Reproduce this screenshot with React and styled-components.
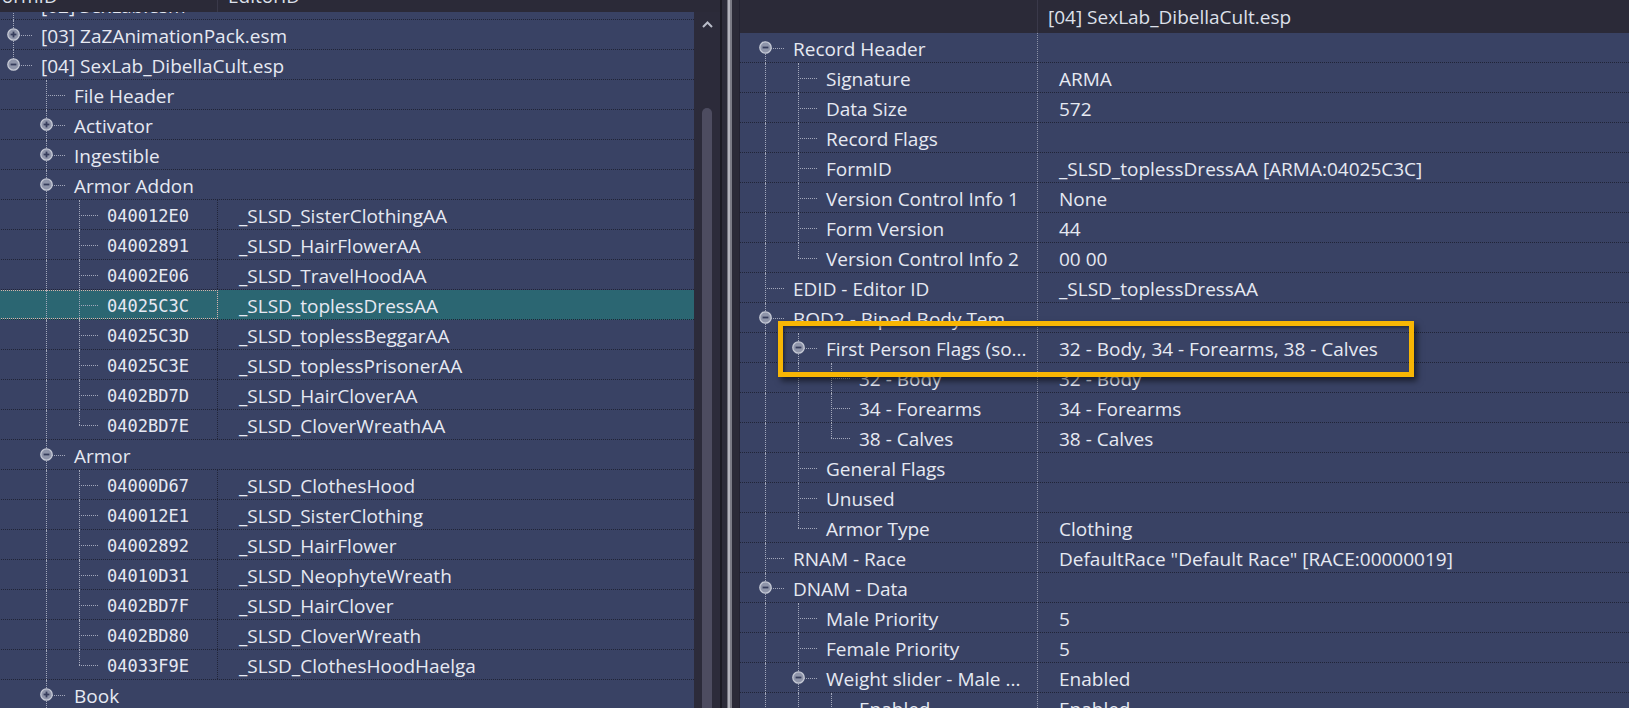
import React from 'react';
import styled, { createGlobalStyle } from 'styled-components';

const GlobalStyle = createGlobalStyle`
  html, body { margin: 0; padding: 0; background: #2b2a38; overflow: hidden; }
  #root { width: 1629px; height: 708px; }
`;

const Frame = styled.div`
  display: flex;
  width: 1629px;
  height: 708px;
  overflow: hidden;
  font-family: "Open Sans", "Noto Sans", sans-serif;
  font-size: 19px;
  color: #e6e9f2;
  background: #2b2a38;
`;

const LeftPane = styled.section`
  flex: 0 0 720px;
  display: flex;
  flex-direction: column;
  overflow: hidden;
`;

const RightPane = styled.section`
  flex: 1 1 auto;
  display: flex;
  flex-direction: column;
  position: relative;
  overflow: hidden;
  min-width: 0;
`;

const HeaderClip = styled.div`
  flex: 0 0 ${p => p.$h}px;
  overflow: hidden;
  background: #2b2a38;
`;

const HeaderBar = styled.div`
  display: flex;
  height: 33px;
  margin-top: ${p => p.$offset}px;
  background: #2b2a38;
`;

const HeaderCell = styled.div`
  flex: ${p => (p.$w ? `0 0 ${p.$w}px` : '1 1 auto')};
  box-sizing: border-box;
  padding-left: ${p => p.$pad}px;
  text-indent: ${p => p.$indent || 0}px;
  line-height: 33px;
  padding-top: 1px;
  white-space: nowrap;
  overflow: hidden;
  color: #dde0ea;
  border-right: ${p => (p.$w ? '1px solid #3a394a' : 'none')};
`;

const Body = styled.div`
  flex: 1 1 auto;
  display: flex;
  min-height: 0;
`;

const TreeView = styled.div`
  flex: 1 1 auto;
  overflow: hidden;
  background: #394264;
  min-width: 0;
`;

const TreeList = styled.div`
  margin-top: ${p => p.$top}px;
  margin-left: ${p => p.$left}px;
`;

const Row = styled.div`
  display: flex;
  height: 30px;
  box-sizing: border-box;
  border-bottom: 1px dotted #202437;
  background: ${p => (p.$sel ? '#2b6672' : 'transparent')};
`;

const NameCell = styled.div`
  display: flex;
  align-items: stretch;
  flex: ${p => (p.$split ? `0 0 ${p.$w}px` : '1 1 auto')};
  min-width: 0;
  box-sizing: border-box;
  padding-left: ${p => p.$pad}px;
  border-right: ${p => (p.$split ? `1px dotted ${p.$sep}` : 'none')};
  outline: ${p => (p.$focus ? '1px dotted #d6b4ae' : 'none')};
  outline-offset: -1px;
`;

const Guide = styled.div`
  flex: 0 0 33px;
  position: relative;
  &::before {
    content: '';
    display: ${p => (p.$on ? 'block' : 'none')};
    position: absolute;
    left: 16px;
    top: 0;
    bottom: -1px;
    border-left: 1px dotted #a3a8bb;
  }
`;

const Node = styled.div`
  flex: 0 0 33px;
  position: relative;
  display: flex;
  align-items: center;
  justify-content: center;
  &::before {
    content: '';
    position: absolute;
    left: 16px;
    top: ${p => (p.$first ? '50%' : '0')};
    bottom: ${p => (p.$last ? '50%' : '-1px')};
    border-left: 1px dotted #a3a8bb;
  }
  &::after {
    content: '';
    position: absolute;
    left: 16px;
    top: 50%;
    width: 19px;
    border-top: 1px dotted #a3a8bb;
  }
  svg { position: relative; z-index: 1; }
`;

const Label = styled.span`
  flex: 1 1 auto;
  min-width: 0;
  box-sizing: border-box;
  height: 29px;
  padding: 4px 8px 0 11px;
  line-height: 25px;
  white-space: nowrap;
  overflow: hidden;
  font-family: ${p => (p.$mono ? '"DejaVu Sans Mono", "Liberation Mono", monospace' : 'inherit')};
  font-size: ${p => (p.$mono ? '17px' : 'inherit')};
`;

const ValueCell = styled.div`
  flex: 1 1 auto;
  min-width: 0;
  box-sizing: border-box;
  height: 29px;
  padding: 4px 0 0 21px;
  line-height: 25px;
  white-space: nowrap;
  overflow: hidden;
`;

const Scrollbar = styled.div`
  flex: 0 0 26px;
  display: flex;
  flex-direction: column;
  align-items: center;
  background: #2c2b3a;
  overflow: hidden;
`;

const ScrollArrow = styled.svg`
  margin-top: 9px;
  flex: 0 0 auto;
`;

const ScrollThumb = styled.div`
  width: 10px;
  flex: 1 1 auto;
  margin-top: 80px;
  margin-bottom: -10px;
  border-radius: 5px;
  background: #4d4c60;
`;

const Splitter = styled.div`
  flex: 0 0 20px;
  background: linear-gradient(
    to right,
    #1c1b24 0 2px,
    #2d2c39 2px 7px,
    #75757f 7px 8px,
    #b3b3bb 8px 10px,
    #7a7a84 10px 12px,
    #2b2a37 12px 19px,
    #232230 19px 20px
  );
`;

const Highlight = styled.div`
  position: absolute;
  left: 38px;
  top: 321px;
  width: 636px;
  height: 56px;
  box-sizing: border-box;
  border: 5px solid #f8b604;
  box-shadow: 3px 4px 6px rgba(0, 0, 0, 0.55), inset 2px 2px 3px rgba(0, 0, 0, 0.35);
  pointer-events: none;
`;

function Expander({ open }) {
  return (
    <svg width="13" height="13" viewBox="0 0 13 13">
      <circle cx="6.5" cy="6.5" r="5.7" fill="#8f95aa" stroke="#c5c9d5" strokeWidth="1.3" />
      <line x1="3.6" y1="6.5" x2="9.4" y2="6.5" stroke="#363d5c" strokeWidth="1.8" />
      {!open && <line x1="6.5" y1="3.6" x2="6.5" y2="9.4" stroke="#363d5c" strokeWidth="1.8" />}
    </svg>
  );
}

function flatten(nodes, depth, guides, above, cont) {
  const rows = [];
  nodes.forEach((n, i) => {
    const last = i === nodes.length - 1 && !cont;
    const first = i === 0 && !above;
    rows.push({ ...n, depth, guides, last, first });
    if (n.children) {
      rows.push(...flatten(n.children, depth + 1, [...guides, !last], true, !!n.cont));
    }
  });
  return rows;
}

const armorAddon = [
  ['040012E0', '_SLSD_SisterClothingAA'],
  ['04002891', '_SLSD_HairFlowerAA'],
  ['04002E06', '_SLSD_TravelHoodAA'],
  ['04025C3C', '_SLSD_toplessDressAA', true],
  ['04025C3D', '_SLSD_toplessBeggarAA'],
  ['04025C3E', '_SLSD_toplessPrisonerAA'],
  ['0402BD7D', '_SLSD_HairCloverAA'],
  ['0402BD7E', '_SLSD_CloverWreathAA'],
];

const armor = [
  ['04000D67', '_SLSD_ClothesHood'],
  ['040012E1', '_SLSD_SisterClothing'],
  ['04002892', '_SLSD_HairFlower'],
  ['04010D31', '_SLSD_NeophyteWreath'],
  ['0402BD7F', '_SLSD_HairClover'],
  ['0402BD80', '_SLSD_CloverWreath'],
  ['04033F9E', '_SLSD_ClothesHoodHaelga'],
];

const rec = ([id, name, sel]) => ({ label: id, value: name, mono: true, sel: !!sel });

const leftTree = [
  { label: '[02] SexLab.esm', exp: '+' },
  { label: '[03] ZaZAnimationPack.esm', exp: '+' },
  {
    label: '[04] SexLab_DibellaCult.esp',
    exp: '-',
    cont: true,
    children: [
      { label: 'File Header' },
      { label: 'Activator', exp: '+' },
      { label: 'Ingestible', exp: '+' },
      { label: 'Armor Addon', exp: '-', children: armorAddon.map(rec) },
      { label: 'Armor', exp: '-', children: armor.map(rec) },
      { label: 'Book', exp: '+' },
    ],
  },
];

const rightTree = [
  {
    label: 'Record Header',
    exp: '-',
    children: [
      { label: 'Signature', value: 'ARMA' },
      { label: 'Data Size', value: '572' },
      { label: 'Record Flags', value: '' },
      { label: 'FormID', value: '_SLSD_toplessDressAA [ARMA:04025C3C]' },
      { label: 'Version Control Info 1', value: 'None' },
      { label: 'Form Version', value: '44' },
      { label: 'Version Control Info 2', value: '00 00' },
    ],
  },
  { label: 'EDID - Editor ID', value: '_SLSD_toplessDressAA' },
  {
    label: 'BOD2 - Biped Body Tem...',
    exp: '-',
    children: [
      {
        label: 'First Person Flags (so...',
        value: '32 - Body, 34 - Forearms, 38 - Calves',
        exp: '-',
        children: [
          { label: '32 - Body', value: '32 - Body' },
          { label: '34 - Forearms', value: '34 - Forearms' },
          { label: '38 - Calves', value: '38 - Calves' },
        ],
      },
      { label: 'General Flags', value: '' },
      { label: 'Unused', value: '' },
      { label: 'Armor Type', value: 'Clothing' },
    ],
  },
  { label: 'RNAM - Race', value: 'DefaultRace "Default Race" [RACE:00000019]' },
  {
    label: 'DNAM - Data',
    exp: '-',
    cont: true,
    children: [
      { label: 'Male Priority', value: '5' },
      { label: 'Female Priority', value: '5' },
      {
        label: 'Weight slider - Male ...',
        value: 'Enabled',
        exp: '-',
        cont: true,
        children: [{ label: 'Enabled', value: 'Enabled' }],
      },
    ],
  },
];

const leftRows = flatten(leftTree, 0, [], true, false);
const rightRows = flatten(rightTree, 0, [], false, true);

function TreeRow({ row, split, width, pad, sep }) {
  const isSplit = split === 'always' || row.value !== undefined;
  return (
    <Row $sel={row.sel}>
      <NameCell $split={isSplit} $w={width} $pad={pad} $sep={sep} $focus={row.sel}>
        {row.guides.map((on, i) => (
          <Guide key={i} $on={on} />
        ))}
        <Node $first={row.first} $last={row.last}>
          {row.exp && <Expander open={row.exp === '-'} />}
        </Node>
        <Label $mono={row.mono}>{row.label}</Label>
      </NameCell>
      {isSplit && <ValueCell>{row.value}</ValueCell>}
    </Row>
  );
}

export default function App() {
  return (
    <>
      <GlobalStyle />
      <Frame>
        <LeftPane>
          <HeaderClip $h={12}>
            <HeaderBar $offset={-21}>
              <HeaderCell $w={218} $pad={0} $indent={-8}>FormID</HeaderCell>
              <HeaderCell $pad={10}>EditorID</HeaderCell>
            </HeaderBar>
          </HeaderClip>
          <Body>
            <TreeView>
              <TreeList $top={-22} $left={-3}>
                {leftRows.map((r, i) => (
                  <TreeRow key={i} row={r} split="value" width={221} pad={0} sep="#22263a" />
                ))}
              </TreeList>
            </TreeView>
            <Scrollbar>
              <ScrollArrow width="11" height="7" viewBox="0 0 11 7">
                <path d="M1 6 L5.5 1.5 L10 6" fill="none" stroke="#b9bcc8" strokeWidth="2" />
              </ScrollArrow>
              <ScrollThumb />
            </Scrollbar>
          </Body>
        </LeftPane>
        <Splitter />
        <RightPane>
          <HeaderClip $h={33}>
            <HeaderBar $offset={0}>
              <HeaderCell $w={298} $pad={0}></HeaderCell>
              <HeaderCell $pad={10}>[04] SexLab_DibellaCult.esp</HeaderCell>
            </HeaderBar>
          </HeaderClip>
          <Body>
            <TreeView>
              <TreeList $top={0} $left={0}>
                {rightRows.map((r, i) => (
                  <TreeRow key={i} row={r} split="always" width={298} pad={9} sep="#8a90a5" />
                ))}
              </TreeList>
            </TreeView>
          </Body>
          <Highlight />
        </RightPane>
      </Frame>
    </>
  );
}
